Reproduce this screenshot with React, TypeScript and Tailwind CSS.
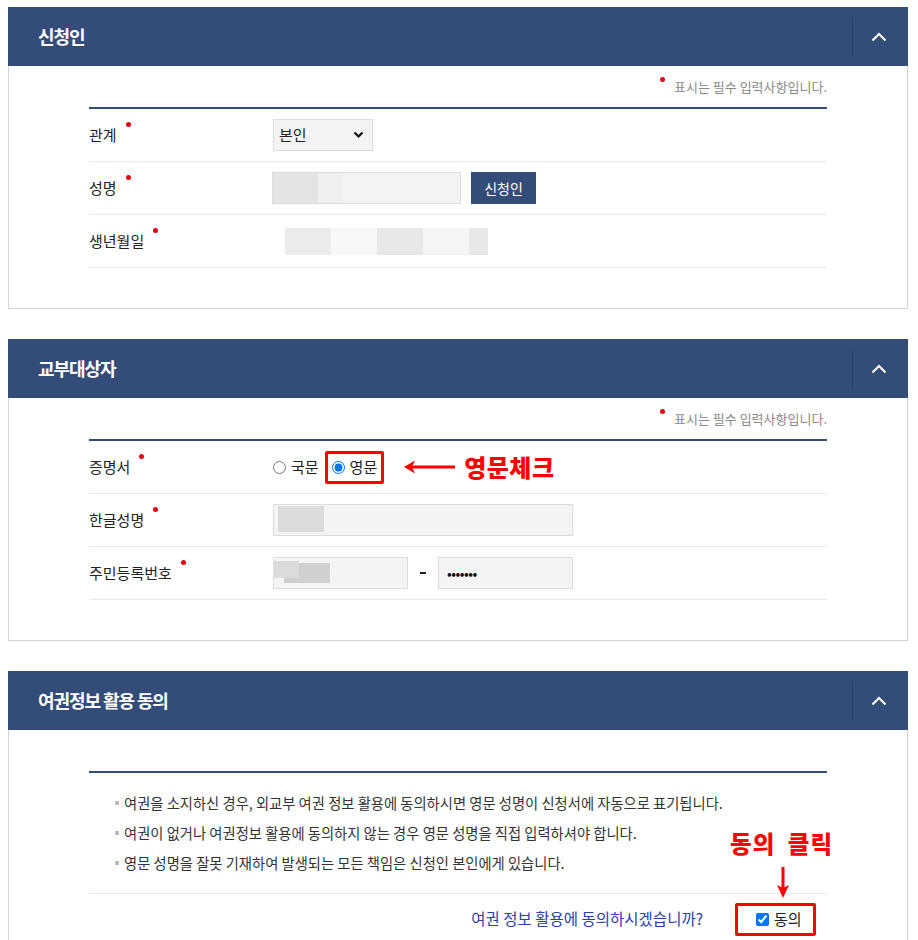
import React from 'react';

const FONT = { fontFamily: '"Noto Sans CJK KR", "Noto Sans", sans-serif' };

const Req = () => (
    <span className="inline-block w-[5px] h-[5px] rounded-full bg-[#e60012] relative -top-[12px] ml-[9px] align-middle" />
);

const SectionHeader = ({ title }: { title: string }) => (
    <div className="h-[59px] bg-[#344d78] flex items-center justify-between">
        <h2 className="pl-[30px] text-[18px] font-bold text-white tracking-[-0.06em]">{title}</h2>
        <div className="w-[56px] h-[40px] border-l border-[#2c4269] flex items-center justify-center pr-[4px]">
            <svg width="16" height="10" viewBox="0 0 16 10" fill="none">
                <path d="M1.5 8.5 L8 2 L14.5 8.5" stroke="white" strokeWidth="2" />
            </svg>
        </div>
    </div>
);

const RequiredNote = () => (
    <div className="h-[41px] flex items-center justify-end text-[13px] text-[#8a8a8a]">
        <span className="w-[5px] h-[5px] rounded-full bg-[#e60012] relative -top-[7px] mr-[9px]" />
        표시는 필수 입력사항입니다.
    </div>
);

const Row = ({ label, children }: { label: string, children: React.ReactNode }) => (
    <div className="h-[53px] flex items-center border-b border-[#e9e9e9]">
        <div className="w-[184px] text-[15px] text-[#222]">
            {label}
            <Req />
        </div>
        <div className="flex items-center">{children}</div>
    </div>
);

const Field = ({ w, children }: { w: string, children?: React.ReactNode }) => (
    <div className={`${w} h-[32px] bg-[#f4f4f4] border border-[#dcdcdc] relative overflow-hidden`}>{children}</div>
);

export default function App() {
    return (
        <div className="w-[918px] h-[940px] overflow-hidden bg-white text-[#222] pl-[8px] pr-[10px] pt-[7px]" style={FONT}>
            {/* 신청인 */}
            <section>
                <SectionHeader title="신청인" />
                <div className="border border-t-0 border-[#d5d5d5] px-[80px] pb-[40px]">
                    <RequiredNote />
                    <div className="h-[2px] bg-[#344d78]" />
                    <Row label="관계">
                        <div className="w-[100px] h-[32px] bg-[#f4f4f4] border border-[#dcdcdc] flex items-center justify-between pl-[5px] pr-[8px] text-[15px]">
                            <span>본인</span>
                            <svg width="11" height="8" viewBox="0 0 11 8" fill="none">
                                <path d="M1.5 1.5 L5.5 5.5 L9.5 1.5" stroke="#111" strokeWidth="2.2" />
                            </svg>
                        </div>
                    </Row>
                    <Row label="성명">
                        <div className="flex items-center -ml-[1px]">
                            <Field w="w-[189px]">
                                <div className="absolute left-0 top-0 bottom-0 w-[45px] bg-[#e4e4e4]" />
                                <div className="absolute left-[45px] top-0 bottom-0 w-[25px] bg-[#efefef]" />
                            </Field>
                            <button className="ml-[10px] w-[65px] h-[32px] bg-[#344d78] text-white text-[14px]">신청인</button>
                        </div>
                    </Row>
                    <Row label="생년월일">
                        <div className="ml-[12px] flex h-[27px]">
                            <div className="w-[46px] bg-[#ebebeb]" />
                            <div className="w-[46px] bg-[#f7f7f7]" />
                            <div className="w-[46px] bg-[#e8e8e8]" />
                            <div className="w-[46px] bg-[#f5f5f5]" />
                            <div className="w-[19px] bg-[#e8e8e8]" />
                        </div>
                    </Row>
                </div>
            </section>

            {/* 교부대상자 */}
            <section className="mt-[30px]">
                <SectionHeader title="교부대상자" />
                <div className="border border-t-0 border-[#d5d5d5] px-[80px] pb-[40px]">
                    <RequiredNote />
                    <div className="h-[2px] bg-[#344d78]" />
                    <Row label="증명서">
                        <label className="flex items-center gap-[5px] text-[15px]">
                            <input type="radio" name="cert" readOnly className="w-[13px] h-[13px] m-0" />
                            국문
                        </label>
                        <div className="ml-[6px] h-[33px] border-[3px] border-[#ff0000] rounded-[2px] flex items-center px-[4px]">
                            <label className="flex items-center gap-[5px] text-[15px]">
                                <input type="radio" name="cert" defaultChecked className="w-[13px] h-[13px] m-0" />
                                영문
                            </label>
                        </div>
                        <svg className="ml-[19px]" width="54" height="16" viewBox="0 0 54 16" fill="none">
                            <path d="M9 8 H52" stroke="#ff0000" strokeWidth="3" />
                            <path d="M1 8 L12 1.5 L9 8 L12 14.5 Z" fill="#ff0000" />
                        </svg>
                        <span className="ml-[7px] text-[24px] font-black text-[#ff0000] tracking-[0.02em] leading-none">영문체크</span>
                    </Row>
                    <Row label="한글성명">
                        <Field w="w-[300px]">
                            <div className="absolute left-[4px] top-[1px] w-[46px] h-[26px] bg-[#dcdcdc]" />
                        </Field>
                    </Row>
                    <Row label="주민등록번호">
                        <Field w="w-[135px]">
                            <div className="absolute left-[10px] top-[5px] w-[46px] h-[20px] bg-[#cfd0cf]" />
                            <div className="absolute left-0 top-[3px] w-[25px] h-[17px] bg-[#dcdbda]" />
                        </Field>
                        <span className="mx-[12px] w-[6px] h-[2px] bg-[#222]" />
                        <Field w="w-[135px]">
                            <span className="absolute left-[8px] top-[5px] text-[14px] leading-[20px] tracking-[-0.5px] text-[#111]">•••••••</span>
                        </Field>
                    </Row>
                </div>
            </section>

            {/* 여권정보 활용 동의 */}
            <section className="mt-[30px]">
                <SectionHeader title="여권정보 활용 동의" />
                <div className="border border-t-0 border-[#d5d5d5] px-[80px] pt-[41px] pb-[40px]">
                    <div className="h-[2px] bg-[#344d78]" />
                    <ul className="py-[15px] pl-[26px] border-b border-[#e9e9e9] text-[14.3px] text-[#333]">
                        {[
                            '여권을 소지하신 경우, 외교부 여권 정보 활용에 동의하시면 영문 성명이 신청서에 자동으로 표기됩니다.',
                            '여권이 없거나 여권정보 활용에 동의하지 않는 경우 영문 성명을 직접 입력하셔야 합니다.',
                            '영문 성명을 잘못 기재하여 발생되는 모든 책임은 신청인 본인에게 있습니다.',
                        ].map((t) => (
                            <li key={t} className="h-[30px] flex items-center gap-[5px]">
                                <span className="w-[4px] h-[4px] bg-[#bbbbbb]" />
                                {t}
                            </li>
                        ))}
                    </ul>
                    <div className="relative h-[50px] flex items-center justify-end pr-[11px]">
                        <span className="text-[15.5px] text-[#2b40a8]">여권 정보 활용에 동의하시겠습니까?</span>
                        <div className="ml-[32px] w-[81px] h-[33px] border-[3px] border-[#ff0000] rounded-[2px] flex items-center pl-[18px]">
                            <label className="flex items-center gap-[5px] text-[15px] text-[#222]">
                                <input type="checkbox" defaultChecked className="w-[13px] h-[13px] m-0" />
                                동의
                            </label>
                        </div>
                        {/* annotation */}
                        <div className="absolute right-[-6px] -top-[62px] text-[23.5px] font-black text-[#ff0000] tracking-[0.04em] whitespace-pre leading-none">동의  클릭</div>
                        <svg className="absolute right-[37px] -top-[27px]" width="14" height="32" viewBox="0 0 14 32" fill="none">
                            <path d="M7 0 V22" stroke="#ff0000" strokeWidth="3" />
                            <path d="M7 31 L1 18 L7 21 L13 18 Z" fill="#ff0000" />
                        </svg>
                    </div>
                </div>
            </section>
        </div>
    );
}
